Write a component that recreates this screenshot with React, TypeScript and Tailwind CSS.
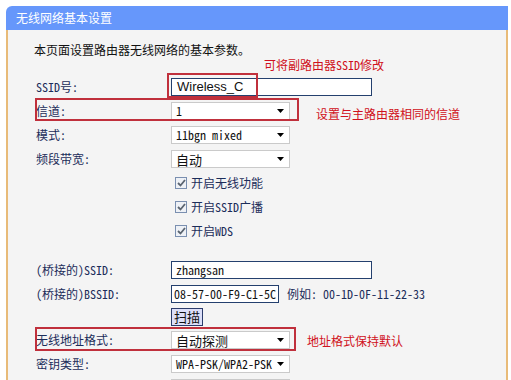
import type { ReactNode } from 'react';

// 下拉框
function Select({ value, mono }: { value: string; mono?: boolean }) {
  return (
    <div className="w-[119px] h-[18px] bg-white border border-[#cacaca] flex items-center justify-between pl-[4px] pr-[5px]">
      <span className={mono ? 'text-[12px] leading-none text-[#111]' : 'text-[13px] leading-none text-[#111]'}>{value}</span>
      <svg width="7" height="4" viewBox="0 0 7 4">
        <path d="M0 0 L7 0 L3.5 4 Z" fill="#000" />
      </svg>
    </div>
  );
}

function Check({ label }: { label: string }) {
  return (
    <div className="flex items-center gap-[4px] text-[12px]">
      <span className="w-[12px] h-[12px] border border-[#7a8fb0] bg-[#eef1f6] flex items-center justify-center">
        <svg width="9" height="8" viewBox="0 0 9 8">
          <path d="M1 4 L3.5 6.5 L8 1" stroke="#5a6470" strokeWidth="1.8" fill="none" />
        </svg>
      </span>
      <span>{label}</span>
    </div>
  );
}

function Row({ label, children, h = 'h-[24px]' }: { label?: string; children?: ReactNode; h?: string }) {
  return (
    <div className={`flex items-center ${h}`}>
      <div className="w-[135px] text-[12px] leading-none">{label}</div>
      <div className="flex items-center">{children}</div>
    </div>
  );
}

export default function App() {
  return (
    <div className="relative w-[511px] h-[380px] bg-white overflow-hidden font-['Noto_Sans_Mono_CJK_SC','Noto_Sans_CJK_SC',monospace] text-[#1c2d5a]">
      <div className="ml-[6px] mt-[6px] w-[502px] rounded-tl-[6px] overflow-hidden">
        <div className="h-[24px] bg-[#6697fb] flex items-center pl-[10px] text-white text-[12px]">无线网络基本设置</div>
        <div className="bg-[#f4f4f4] border-l-2 border-r-2 border-[#e8bb78] pl-[28px] h-[400px]">
          <div className="pt-[10px] h-[30px] flex items-center text-[12px] -ml-[2px] text-[#111]">本页面设置路由器无线网络的基本参数。</div>
          <div className="h-[15px]" />
          <Row label="SSID号:">
            <div className="w-[201px] h-[18px] bg-white border border-[#24406e] flex items-center pl-[5px] font-['Liberation_Sans',sans-serif] text-[13px] text-[#111]">Wireless_C</div>
          </Row>
          <Row label="信道:"><Select value="1" mono /></Row>
          <Row label="模式:"><Select value="11bgn mixed" mono /></Row>
          <Row label="频段带宽:"><Select value="自动" /></Row>
          <Row><div className="pl-[4px]"><Check label="开启无线功能" /></div></Row>
          <Row><div className="pl-[4px]"><Check label="开启SSID广播" /></div></Row>
          <Row><div className="pl-[4px]"><Check label="开启WDS" /></div></Row>
          <div className="h-[15px]" />
          <Row label="(桥接的)SSID:">
            <div className="w-[201px] h-[18px] bg-white border border-[#24406e] flex items-center pl-[4px] text-[12px] text-[#111]">zhangsan</div>
          </Row>
          <Row label="(桥接的)BSSID:">
            <div className="w-[108px] h-[18px] bg-white border border-[#24406e] flex items-center pl-[2px] text-[12px] text-[#111]">08-57-00-F9-C1-5C</div>
            <span className="ml-[8px] text-[12px]">例如: 00-1D-0F-11-22-33</span>
          </Row>
          <Row h="h-[22px]">
            <div className="w-[32px] h-[18px] bg-[#dcdff8] border border-[#2b3b6b] flex items-center justify-center text-[13px] text-[#111]">扫描</div>
          </Row>
          <Row label="无线地址格式:"><Select value="自动探测" /></Row>
          <Row label="密钥类型:"><Select value="WPA-PSK/WPA2-PSK" mono /></Row>
          <Row><Select value="" /></Row>
        </div>
      </div>

      {/* 红色标注 */}
      <div className="absolute left-[167px] top-[73px] w-[91px] h-[25px] border-2 border-[#c0303c]" />
      <div className="absolute left-[35px] top-[98px] w-[264px] h-[23px] border-2 border-[#c0303c]" />
      <div className="absolute left-[35px] top-[327px] w-[261px] h-[24px] border-2 border-[#c0303c]" />
      <div className="absolute left-[264px] top-[56px] text-[12px] text-[#d01020]">可将副路由器SSID修改</div>
      <div className="absolute left-[316px] top-[105px] text-[12px] text-[#d01020]">设置与主路由器相同的信道</div>
      <div className="absolute left-[307px] top-[332px] text-[12px] text-[#d01020]">地址格式保持默认</div>
    </div>
  );
}
